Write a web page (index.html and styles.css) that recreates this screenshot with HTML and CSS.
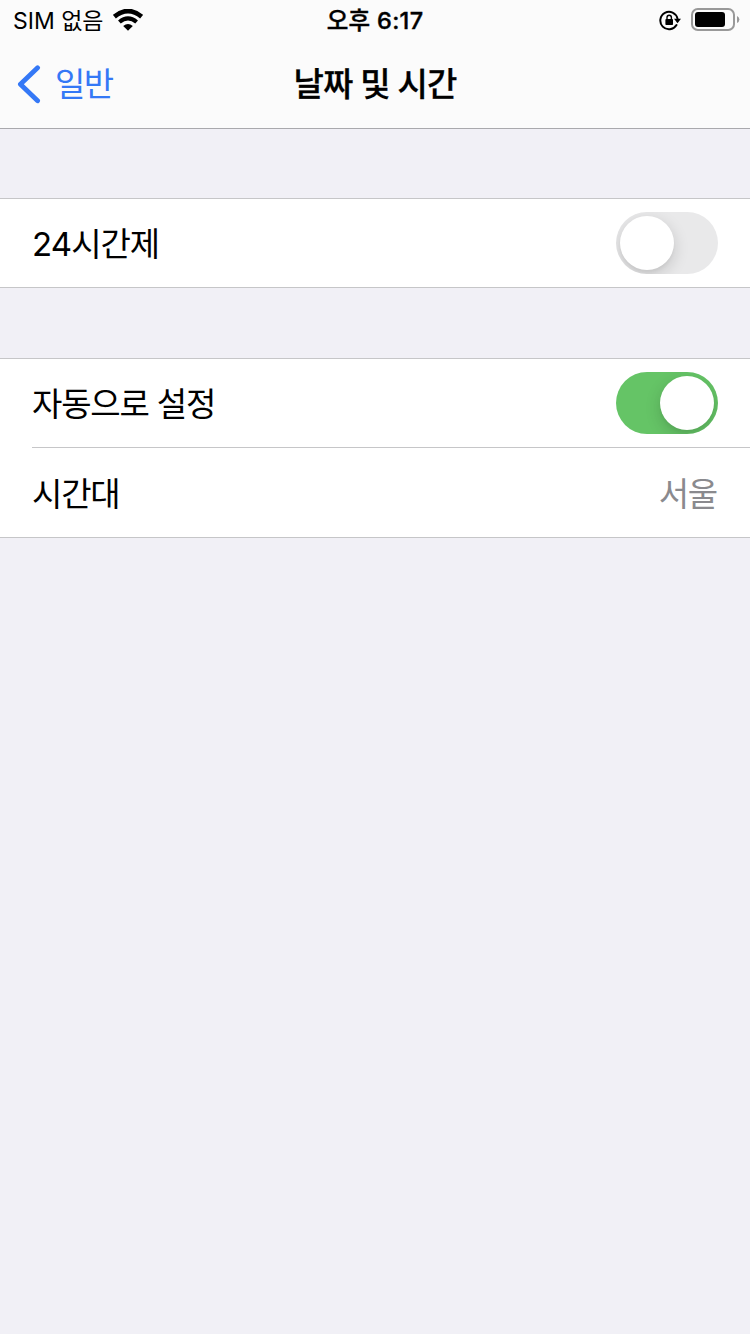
FILE: index.html
```html
<!DOCTYPE html>
<html lang="ko">
<head>
<meta charset="utf-8">
<title>날짜 및 시간</title>
<link rel="stylesheet" href="styles.css">
</head>
<body>
<header class="header">
  <div class="status">
    <div class="status-left">
      <span class="carrier">SIM 없음</span>
      <svg class="wifi" width="30" height="22" viewBox="0 0 30 22">
        <path d="M1.4 7.6Q15-3.6 28.6 7.6" fill="none" stroke="#000" stroke-width="4.6"/>
        <path d="M6.4 13Q15 5.8 23.6 13" fill="none" stroke="#000" stroke-width="4.2"/>
        <path d="M10.2 17.1Q15 13 19.8 17.1L15 21.8Z"/>
      </svg>
    </div>
    <span class="clock">오후 6:17</span>
    <div class="status-right">
      <svg width="22" height="22" viewBox="0 0 22 22">
        <path d="M17.5 16A8.7 8.7 0 1 1 18.5 9.6" fill="none" stroke="#000" stroke-width="2" stroke-linecap="round"/>
        <path d="M15 9.8H22L18.5 14.2Z"/>
        <rect x="6.4" y="10" width="7.6" height="6" rx=".8"/>
        <path d="M8 10.4V8.4a2.2 2.2 0 0 1 4.4 0V10.4" fill="none" stroke="#000" stroke-width="1.4"/>
      </svg>
      <svg width="49" height="24" viewBox="0 0 49 24">
        <rect x="1" y="1" width="42" height="21" rx="5.8" fill="none" stroke="#999" stroke-width="2"/>
        <rect x="4" y="4" width="30" height="15" rx="3"/>
        <path d="M46 8Q48.4 9.2 48.4 11.5T46 15Z" fill="#999"/>
      </svg>
    </div>
  </div>
  <nav class="nav">
    <a class="back">
      <svg width="24" height="40" viewBox="0 0 24 40"><path d="M20.6 3.8L3.4 20.3L20.6 36.8" fill="none" stroke="#3478f6" stroke-width="4.8" stroke-linecap="round" stroke-linejoin="round"/></svg>
      <span>일반</span>
    </a>
    <h1 class="title">날짜 및 시간</h1>
  </nav>
</header>
<main>
  <section class="group">
    <div class="row"><span class="label"><span class="digits">24</span>시간제</span><span class="switch"><span class="knob"></span></span></div>
  </section>
  <section class="group">
    <div class="row"><span class="label">자동으로 설정</span><span class="switch on"><span class="knob"></span></span></div>
    <div class="row last"><span class="label">시간대</span><span class="value">서울</span></div>
  </section>
</main>
</body>
</html>
```
FILE: styles.css
```css
* { box-sizing: border-box; }
body {
  margin: 0;
  min-height: 1334px;
  background: #f1f0f6;
  color: #000;
  font-family: Inter, "Noto Sans CJK KR", sans-serif;
}
.header {
  height: 129px;
  background: #fbfbfb;
  border-bottom: 1px solid #a9a9ad;
}
.status {
  display: grid;
  grid-template: 40px / 1fr auto 1fr;
  align-items: center;
  line-height: 38px;
  white-space: nowrap;
}
.status-left { display: flex; align-items: center; padding-left: 13px; }
.carrier { font-size: 23px; letter-spacing: 0; width: 100px; padding-top: 1px; }
.clock { font-size: 23.5px; font-weight: 500; letter-spacing: 0.3px; padding-top: 1px; -webkit-text-stroke: 0.4px #000; }
.status-right { display: flex; align-items: center; justify-content: flex-end; gap: 10px; padding-right: 10px; }
.nav {
  display: grid;
  grid-template: 88px / 1fr auto 1fr;
  align-items: center;
  line-height: 88px;
}
.back {
  display: flex;
  align-items: center;
  gap: 14px;
  padding-left: 17px;
  color: #3478f6;
  font-size: 33px;
  letter-spacing: -1.6px;
}
.title {
  margin: 0;
  font-size: 33px;
  font-weight: 500;
  letter-spacing: -0.9px;
  -webkit-text-stroke: 0.3px #000;
}
.group {
  margin-top: 69px;
  background: #fff;
  border-top: 1px solid #c6c6c8;
  border-bottom: 1px solid #c6c6c8;
}
.group + .group { margin-top: 70px; }
.row {
  display: flex;
  align-items: center;
  justify-content: space-between;
  height: 88px;
  padding-right: 32px;
  margin-left: 32px;
  font-size: 33px;
  letter-spacing: -1.2px;
  line-height: 88px;
}
.row.last { height: 90px; border-top: 1px solid #c6c6c8; }
.label, .value { padding-top: 2px; }
.digits { letter-spacing: -0.8px; }
.value { margin-right: 1px; color: #8a8a8e; }
.switch {
  display: flex;
  width: 102px;
  height: 62px;
  padding: 4px;
  border-radius: 31px;
  background: #e9e9ea;
  overflow: hidden;
}
.switch.on { background: #65c466; justify-content: flex-end; }
.knob {
  width: 54px;
  height: 54px;
  border-radius: 50%;
  background: #fff;
  box-shadow: 0 5px 16px rgba(0, 0, 0, 0.16), 0 3px 3px rgba(0, 0, 0, 0.03);
}
```
